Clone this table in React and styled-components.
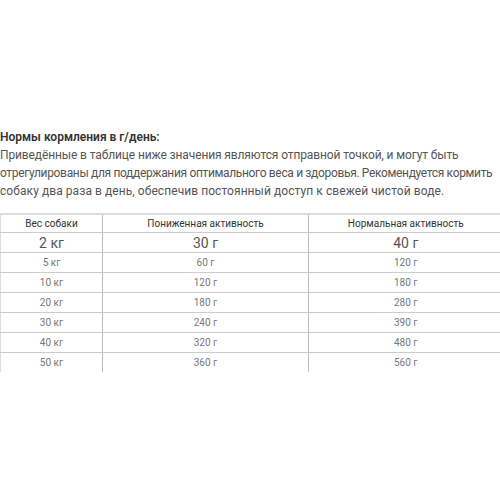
import React from 'react';
import styled, { createGlobalStyle } from 'styled-components';

const GlobalStyle = createGlobalStyle`
  body {
    margin: 0;
    background: #fff;
    font-family: "Roboto", "Liberation Sans", sans-serif;
  }
`;

const Page = styled.div`
  padding-top: 128px;
  width: 500px;
  overflow: hidden;
`;

const Title = styled.h3`
  margin: 0;
  font-size: 12px;
  line-height: 18px;
  font-weight: 600;
  color: #333;
`;

const Text = styled.p`
  margin: 0 0 13px;
  font-size: 12px;
  line-height: 18px;
  color: #555;
  white-space: nowrap;
`;

const Line = styled.span`
  display: block;
  letter-spacing: ${(p) => p.$ls};
`;

const Table = styled.table`
  width: 502px;
  border-collapse: collapse;
  border-top: 2px solid #ddd;
  table-layout: fixed;
`;

const Cell = styled.td`
  text-align: center;
  padding: 0;
  height: ${(p) => (p.$big ? '19px' : '19px')};
  font-size: ${(p) => (p.$big ? '14px' : '10px')};
  color: ${(p) => (p.$big ? '#555' : '#777')};
  border-bottom: ${(p) => (p.$last ? 'none' : '1px solid #ccc')};
  border-left: 1px solid ${(p) => (p.$first ? '#ddd' : '#bbb')};
`;

const Head = styled.th`
  text-align: center;
  padding: 0;
  height: 17px;
  font-size: 10px;
  font-weight: 400;
  color: #333;
  border-bottom: 1px solid #ccc;
  border-left: 1px solid ${(p) => (p.$first ? '#ddd' : '#bbb')};
`;

const rows = [
  ['2 кг', '30 г', '40 г'],
  ['5 кг', '60 г', '120 г'],
  ['10 кг', '120 г', '180 г'],
  ['20 кг', '180 г', '280 г'],
  ['30 кг', '240 г', '390 г'],
  ['40 кг', '320 г', '480 г'],
  ['50 кг', '360 г', '560 г'],
];

export default function App() {
  return (
    <Page>
      <GlobalStyle />
      <Title>Нормы кормления в г/день:</Title>
      <Text>
        <Line $ls="-0.12px">Приведённые в таблице ниже значения являются отправной точкой, и могут быть</Line>
        <Line $ls="-0.34px">отрегулированы для поддержания оптимального веса и здоровья. Рекомендуется кормить</Line>
        <Line $ls="0.07px">собаку два раза в день, обеспечив постоянный доступ к свежей чистой воде.</Line>
      </Text>
      <Table>
        <colgroup>
          <col style={{ width: 102 }} />
          <col style={{ width: 206 }} />
          <col style={{ width: 194 }} />
        </colgroup>
        <thead>
          <tr>
            <Head $first>Вес собаки</Head>
            <Head>Пониженная активность</Head>
            <Head>Нормальная активность</Head>
          </tr>
        </thead>
        <tbody>
          {rows.map((r, i) => (
            <tr key={r[0]}>
              {r.map((c, j) => (
                <Cell key={j} $first={j === 0} $big={i === 0} $last={i === rows.length - 1}>
                  {c}
                </Cell>
              ))}
            </tr>
          ))}
        </tbody>
      </Table>
    </Page>
  );
}
